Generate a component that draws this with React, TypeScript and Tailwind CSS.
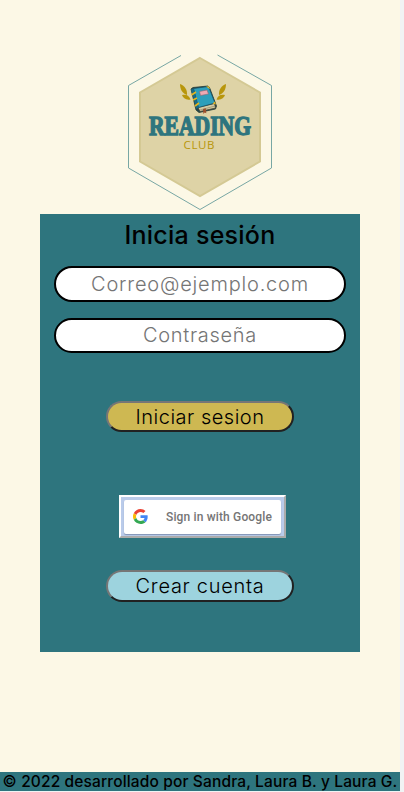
function Logo() {
  return (
    <svg width="160" height="164" viewBox="120 50 160 164" className="block shrink-0" aria-label="Reading Club">
      <path d="M181 55.5 128.500 85.500V168L200 209.500 271.500 168V85.500L217.500 55" fill="none" stroke="#78a7a4" strokeWidth="1" />
      <path d="M200 58 260 92.500V161.500L200 196 140 161.500V92.500Z" fill="#ded3a6" stroke="#d4c994" strokeWidth="2" />
      <g fill="#b8960c">
        <path d="M180 84C185 86 187.500 90 187 95C182 93 180 89 180 84Z" />
        <path d="M182 95C187 94 189 96 190.500 99.500C186 100.500 183 98 182 95Z" />
        <path d="M226 84C221 86 218.500 90 219 95C224 93 226 89 226 84Z" />
        <path d="M225 95C220 94 218 96 216.500 99.500C221 100.500 224 98 225 95Z" />
      </g>
      <path d="M191 89 193 87.500 208 86 209.500 87.500 216.500 106 215.500 109 199 112.500 196 110Z" fill="#23434a" stroke="#263c36" strokeWidth=".8" />
      <path d="M198 107.500 214.500 103.500 215.500 108 200 111.500Z" fill="#d5cba4" stroke="#44422e" strokeWidth=".7" />
      <path d="M200 110 215 106" stroke="#918d6d" strokeWidth=".7" />
      <path d="M193.500 88.500 208.500 86.500 215 103 198.500 107.500Z" fill="#2d9fbb" stroke="#174d60" strokeWidth=".7" />
      <path d="M191 89.500 193.500 88.500 198.500 107.500 196.500 109Z" fill="#176b88" />
      <path d="m199.500 91.500 7.500-1.500 1.500 4-8 1.500z" fill="#efa9b3" stroke="#8f6571" strokeWidth=".6" />
      <path d="m191.500 95 4.500-3M193 100l4-2M195 106l4-3" stroke="#e5b51f" strokeWidth="1.700" />
      <path d="m206 86.500 3-.3 1 3zM212.500 103.500l2.500-2 .8 3z" fill="#e5b51f" />
      <path d="m203 109 2.800-.8.5 5-1.600-.8-1.300 1.600z" fill="#9b502c" />
      <text x="149" y="134.500" textLength="102" lengthAdjust="spacingAndGlyphs" fontFamily="Liberation Serif, serif" fontWeight="700" fontSize="26.500" fill="#2e757e" stroke="#2e757e" strokeWidth="1.400">READING</text>
      <text x="183.500" y="149" textLength="31" fontFamily="Open Sans, sans-serif" fontSize="11.500" fill="#b8960c">CLUB</text>
    </svg>
  );
}

function GoogleMark() {
  return (
    <svg width="15" height="15" viewBox="0 0 48 48" className="mb-px block shrink-0">
      <path fill="#EA4335" d="M24 9.500c3.540 0 6.710 1.220 9.210 3.600l6.850-6.850C35.900 2.380 30.470 0 24 0 14.620 0 6.510 5.380 2.560 13.220l7.980 6.190C12.430 13.720 17.740 9.500 24 9.500z" />
      <path fill="#4285F4" d="M46.980 24.550c0-1.570-.15-3.090-.38-4.550H24v9.020h12.940c-.58 2.960-2.260 5.480-4.780 7.180l7.730 6c4.510-4.180 7.090-10.360 7.090-17.650z" />
      <path fill="#FBBC05" d="M10.530 28.590a14.500 14.500 0 0 1 0-9.180l-7.980-6.190a24 24 0 0 0 0 21.560l7.980-6.190z" />
      <path fill="#34A853" d="M24 48c6.480 0 11.930-2.130 15.890-5.810l-7.730-6c-2.150 1.450-4.920 2.300-8.160 2.300-6.260 0-11.570-4.220-13.470-9.910l-7.980 6.190C6.510 42.620 14.620 48 24 48z" />
    </svg>
  );
}

export default function App() {
  return (
    <div className="h-[792px] w-[404px] overflow-hidden bg-[#f1f3f4] font-[Inter,sans-serif] text-black">
      <div className="flex h-[791px] w-[400px] flex-col items-center bg-[#fcf8e6] pt-[50px]">
        <Logo />
        <main className="flex h-[438px] w-80 shrink-0 flex-col items-center bg-[#2e757e]">
          <h1 className="mt-[5px] h-[33px] whitespace-nowrap text-[25px] leading-[33px] font-medium tracking-[0.25px]">Inicia sesión</h1>
          <input aria-label="Correo" placeholder="Correo@ejemplo.com" className="mt-[14px] h-9 w-[292px] rounded-[20px] border-2 border-black bg-white text-center text-[20px] font-light tracking-[0.8px] placeholder:text-[#757575]" />
          <input aria-label="Contraseña" type="password" placeholder="Contraseña" className="mt-4 h-[35px] w-[292px] rounded-[20px] border-2 border-black bg-white pb-0.5 text-center text-[20px] font-light tracking-[0.7px] placeholder:text-[#757575]" />
          <button className="mt-[48px] flex h-[31px] w-[188px] items-center justify-center rounded-[20px] border-2 border-t-[#767676] border-r-[#212121] border-b-[#212121] border-l-[#767676] bg-[#ceb852] text-[20px] leading-none font-light tracking-[0.5px]">Iniciar sesion</button>
          <button className="mt-[63px] ml-[5px] flex h-[43px] w-[167px] border-2 border-t-white border-r-[#ababab] border-b-[#ababab] border-l-white bg-[#bacbea] px-[3px] pt-[3px] pb-1">
            <span className="flex h-[34px] w-full items-center rounded-[2px] bg-white pl-[9px] shadow-[0_1px_1px_#8294b5]">
              <GoogleMark />
              <span className="ml-[18px] whitespace-nowrap font-[Roboto,sans-serif] text-[12px] font-medium tracking-[0.15px] text-[#757575]">Sign in with Google</span>
            </span>
          </button>
          <button className="mt-8 flex h-8 w-[188px] items-center justify-center rounded-[20px] border-2 border-t-[#767676] border-r-[#212121] border-b-[#212121] border-l-[#767676] bg-[#9dd3de] text-[20px] leading-none font-light tracking-[0.7px]">Crear cuenta</button>
        </main>
        <footer className="mt-auto flex h-[19px] w-full shrink-0 items-center justify-center whitespace-nowrap bg-[#2e757e] text-[15.500px] leading-[19px] font-medium tracking-[0.14px]">© 2022 desarrollado por Sandra, Laura B. y Laura G.</footer>
      </div>
    </div>
  );
}
